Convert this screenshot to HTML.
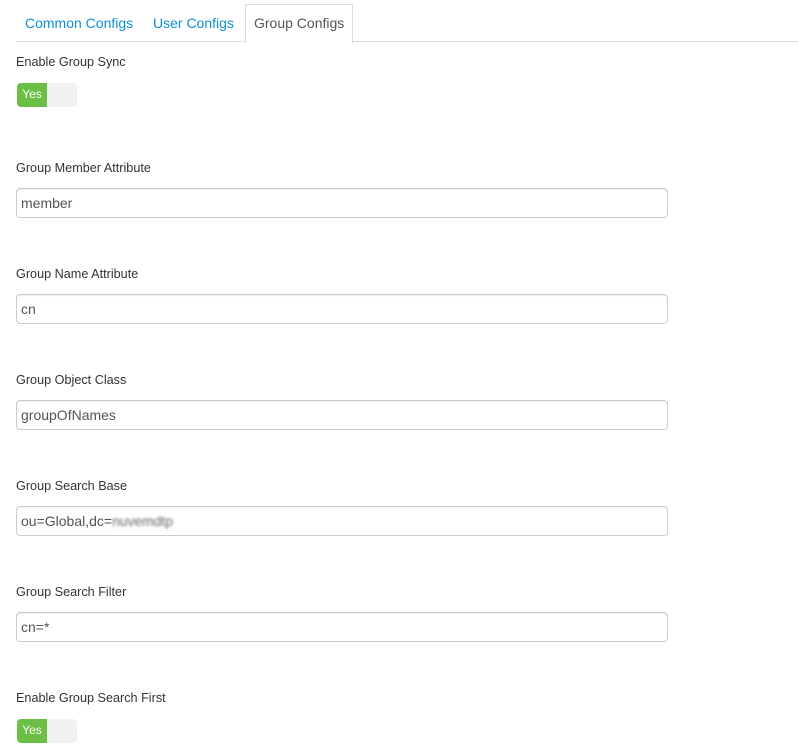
<!DOCTYPE html>
<html>
<head>
<meta charset="utf-8">
<style>
html,body{margin:0;padding:0;background:#fff;}
body{width:798px;height:754px;position:relative;overflow:hidden;font-family:"Liberation Sans",Arial,sans-serif;color:#333;}
.tabline{position:absolute;left:16px;top:41px;width:782px;height:1px;background:#ddd;}
.tab{position:absolute;top:15px;font-size:14px;line-height:16px;color:#0f8fd6;white-space:nowrap;}
.active{position:absolute;left:245px;top:4px;width:106px;height:38px;border:1px solid #ddd;border-bottom:0;background:#fff;box-sizing:content-box;}
.label{position:absolute;left:16px;font-size:12.65px;line-height:14px;color:#333;white-space:nowrap;}
.input{position:absolute;left:16px;width:652px;height:30px;box-sizing:border-box;border:1px solid #ccc;border-radius:4px;background:#fff;box-shadow:inset 0 1px 1px rgba(0,0,0,.075);font-size:14px;line-height:28px;padding-left:4px;color:#555;white-space:nowrap;}
.sw{position:absolute;left:17px;width:60px;height:24px;border-radius:4px;background:#f1f1f1;overflow:hidden;}
.sw span{position:absolute;left:0;top:0;width:30px;height:24px;background:#6cbf45;color:#fff;font-size:12px;line-height:23px;text-align:center;}
.blur{filter:blur(1.4px);color:#666;}
</style>
</head>
<body>
<div class="tabline"></div>
<div class="active"></div>
<div class="tab" style="left:25px">Common Configs</div>
<div class="tab" style="left:153px">User Configs</div>
<div class="tab" style="left:254px;color:#555">Group Configs</div>

<div class="label" style="top:55px">Enable Group Sync</div>
<div class="sw" style="top:83px"><span>Yes</span></div>

<div class="label" style="top:161px">Group Member Attribute</div>
<div class="input" style="top:188px">member</div>

<div class="label" style="top:267px">Group Name Attribute</div>
<div class="input" style="top:294px">cn</div>

<div class="label" style="top:373px">Group Object Class</div>
<div class="input" style="top:400px">groupOfNames</div>

<div class="label" style="top:479px">Group Search Base</div>
<div class="input" style="top:506px">ou=Global,dc=<span class="blur" style="font-size:14px;letter-spacing:-.1px">nuvemdtp</span></div>

<div class="label" style="top:585px">Group Search Filter</div>
<div class="input" style="top:612px">cn=*</div>

<div class="label" style="top:691px">Enable Group Search First</div>
<div class="sw" style="top:719px"><span>Yes</span></div>
</body>
</html>
